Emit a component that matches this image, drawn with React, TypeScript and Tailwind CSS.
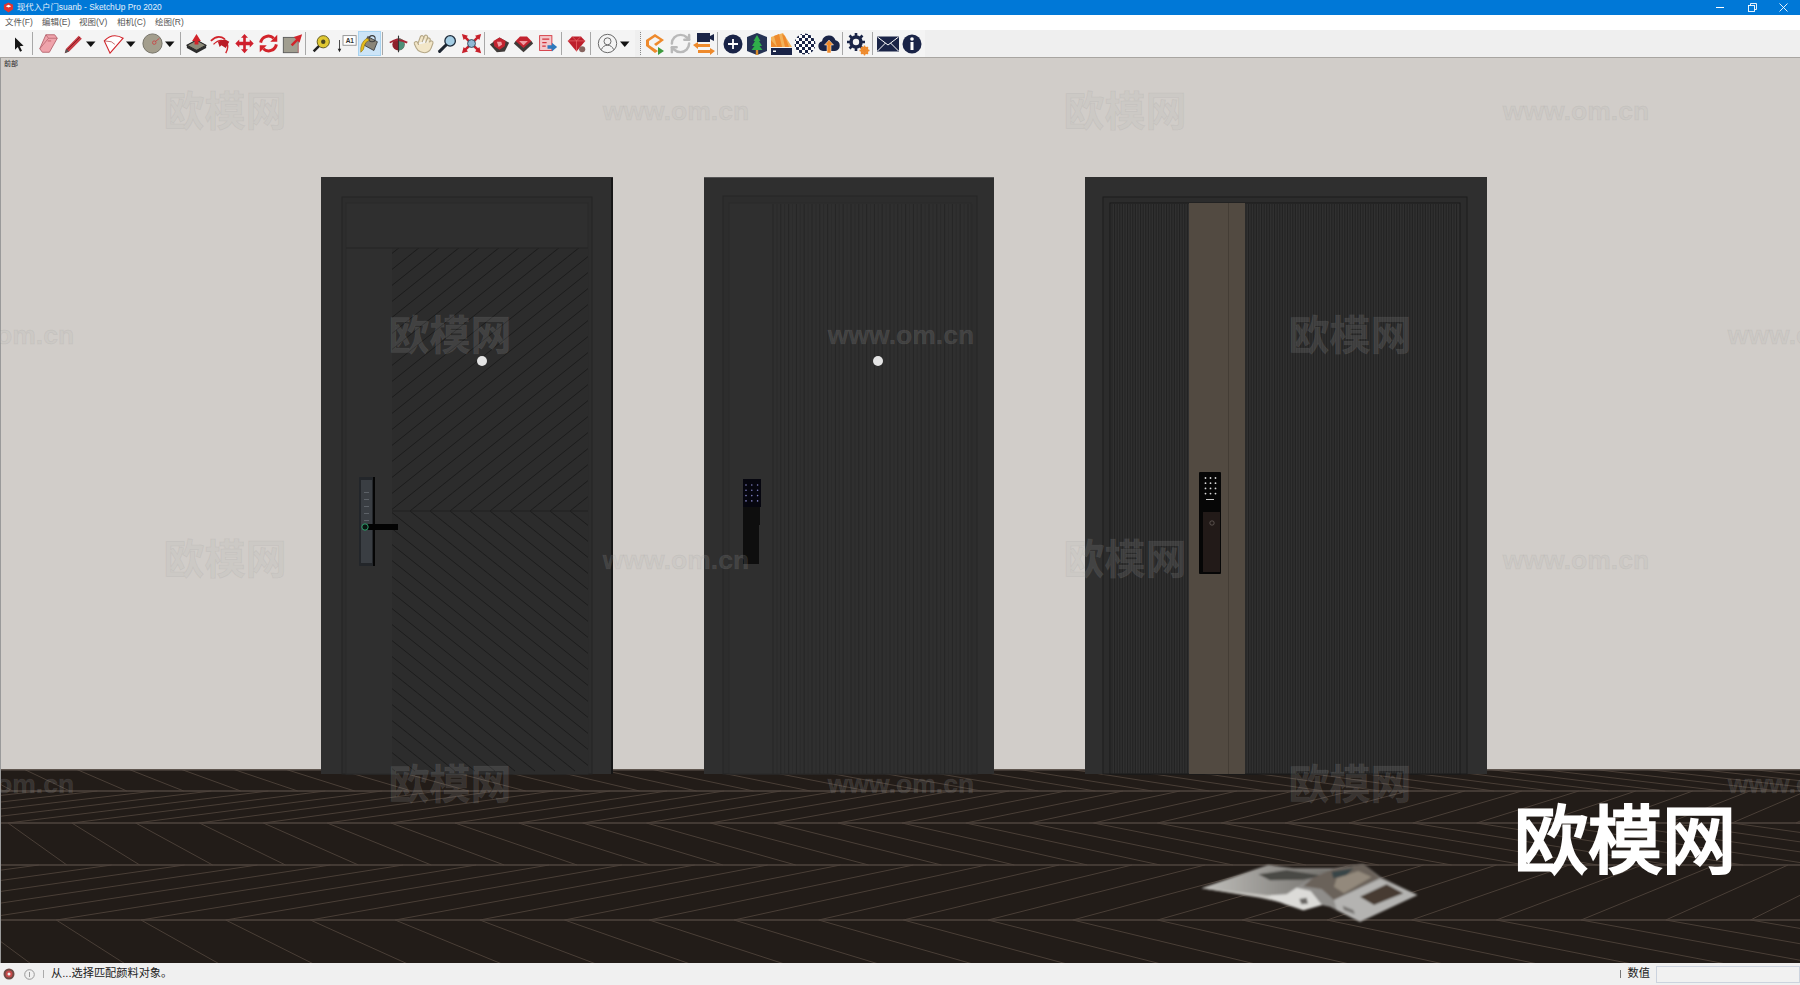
import { Hand, RefreshCw } from 'lucide-react';
import type { ReactNode } from 'react';

const NAVY = '#1a2447';
const ORANGE = '#ee8a2c';
const RED = '#d2232a';

const range = (from: number, to: number, step: number) => {
  const out: number[] = [];
  for (let v = from; v <= to; v += step) out.push(v);
  return out;
};

// floor is a herringbone seen in perspective, horizon y=526, vanishing point x=900
const H = 526;
const VP = 900;
const P = 0.215;
const floorRows = [
  { top: 765, bottom: 791, phase: 0.43, shift: -0.57, fromBottom: true },
  { top: 791, bottom: 823, phase: 0.03, shift: 0.62, fromBottom: true },
  { top: 823, bottom: 865, phase: 0.03, shift: 0.546, fromBottom: false },
  { top: 865, bottom: 920, phase: 0.04, shift: 0.676, fromBottom: true },
  { top: 920, bottom: 996, phase: 0.04, shift: 0.6, fromBottom: false },
];

const Floor = () => (
  <g>
    <rect x="0" y="765" width="1800" height="205" fill="#221c18" />
    {floorRows.map((row) =>
      range(-40, 40, 1).map((k) => {
        const u = P * (k + row.phase);
        const y1 = row.fromBottom ? row.bottom : row.top;
        const y2 = row.fromBottom ? row.top : row.bottom;
        return (
          <line
            key={row.top + '-' + k}
            x1={VP + u * (y1 - H)}
            y1={y1}
            x2={VP + (u + row.shift) * (y2 - H)}
            y2={y2}
            stroke="#4a3f37"
            strokeWidth="1"
          />
        );
      })
    )}
    {[791, 823, 865, 920].map((y) => (
      <line key={y} x1="0" x2="1800" y1={y} y2={y} stroke="#4f453e" strokeWidth="1.3" />
    ))}
  </g>
);

const Peephole = ({ x }: { x: number }) => <circle cx={x} cy="361" r="5" fill="#e4e4e4" />;

const DoorOne = () => (
  <g>
    <clipPath id="diagTop">
      <rect x="392" y="248" width="196" height="263" />
    </clipPath>
    <clipPath id="diagBottom">
      <rect x="392" y="511" width="196" height="262" />
    </clipPath>
    <rect x="321" y="177" width="292" height="597" fill="#2f2f2f" />
    <rect x="611" y="178" width="2" height="596" fill="#161616" />
    <rect x="342" y="197" width="250" height="577" fill="#2d2d2d" stroke="#242424" />
    <rect x="346" y="203" width="242" height="571" fill="#2f2f2f" stroke="#2a2a2a" />
    <rect x="392" y="248" width="196" height="526" fill="#2c2c2c" />
    <g clipPath="url(#diagTop)">
      {range(50, 600, 20).map((x) => (
        <line key={x} x1={x} y1="511" x2={x + 330} y2="247" stroke="#1c1c1c" />
      ))}
    </g>
    <g clipPath="url(#diagBottom)">
      {range(50, 600, 20).map((x) => (
        <line key={x} x1={x} y1="511" x2={x + 325} y2="771" stroke="#1c1c1c" />
      ))}
    </g>
    <line x1="346" x2="588" y1="248" y2="248" stroke="#242424" />
    <line x1="392" x2="588" y1="511" y2="511" stroke="#202020" />
    <Peephole x={482} />
    <rect x="359" y="477" width="16" height="89" rx="1" fill="#23262a" />
    <rect x="373" y="477" width="2" height="89" fill="#050505" />
    <rect x="361" y="480" width="11" height="83" fill="#3a3e43" />
    {range(492, 521, 7).map((y) => (
      <rect key={y} x="364" y={y} width="5" height="1" fill="#5c6167" />
    ))}
    <rect x="367" y="524" width="31" height="6" fill="#030303" />
    <circle cx="365" cy="527" r="3.2" fill="#0b1512" stroke="#2f9e6c" strokeWidth="1" />
  </g>
);

const DoorTwo = () => (
  <g>
    <rect x="704" y="177" width="290" height="597" fill="#2f2f2f" />
    <rect x="704" y="177" width="290" height="1" fill="#555" />
    <rect x="723" y="196" width="254" height="578" fill="#2d2d2d" stroke="#262626" />
    <rect x="729" y="203" width="242" height="571" fill="#2f2f2f" stroke="#2a2a2a" />
    {range(773, 971, 7.8).map((x) => (
      <g key={x}>
        <line x1={x} x2={x} y1="204" y2="774" stroke="#262626" />
        <line x1={x + 3.9} x2={x + 3.9} y1="204" y2="774" stroke="#2b2b2b" />
      </g>
    ))}
    <Peephole x={878} />
    <rect x="743" y="479" width="18" height="28" fill="#06060f" />
    {[0, 1, 2, 3].map((r) =>
      [0, 1, 2].map((c) => (
        <circle key={r + '-' + c} cx={746 + c * 5.8} cy={485 + r * 5.3} r="0.8" fill="#7f7fc0" />
      ))
    )}
    <rect x="743" y="507" width="17" height="18" fill="#0e0e0e" />
    <rect x="743" y="525" width="16" height="39" fill="#0e0e0e" />
  </g>
);

const DoorThree = () => (
  <g>
    <rect x="1085" y="177" width="402" height="597" fill="#2f2f2f" />
    <rect x="1103" y="197" width="364" height="577" fill="#2c2c2c" stroke="#1c1c1c" />
    <rect x="1110" y="203" width="350" height="571" fill="#303030" stroke="#191919" />
    {range(1112, 1188, 2.6).map((x) => (
      <line key={x} x1={x} x2={x} y1="204" y2="774" stroke="#222222" />
    ))}
    {range(1246, 1459, 2.6).map((x) => (
      <line key={x} x1={x} x2={x} y1="204" y2="774" stroke="#222222" />
    ))}
    <rect x="1189" y="203" width="56" height="571" fill="#524a41" />
    <rect x="1228" y="203" width="1" height="571" fill="#443d35" />
    <rect x="1199" y="472" width="22" height="102" rx="1" fill="#060606" />
    <rect x="1203" y="512" width="17" height="60" fill="#221a18" />
    {[0, 1, 2, 3].map((r) =>
      [0, 1, 2].map((c) => (
        <circle key={r + '-' + c} cx={1205.5 + c * 5} cy={478 + r * 5.2} r="0.9" fill="#d8d8d8" />
      ))
    )}
    <rect x="1206" y="499" width="8" height="1" fill="#ccc" />
    <circle cx="1212" cy="523" r="2.2" fill="none" stroke="#6d6460" strokeWidth="0.7" />
  </g>
);

const Magazine = () => (
  <g transform="translate(1190 855) scale(0.3333)" filter="url(#soft)">
    <polygon
      points="35,100 235,30 310,40 430,40 520,27 570,65 682,120 510,200 420,155 395,150 340,166 300,150 210,126"
      fill="#8f8d8a"
    />
    <polygon points="35,100 235,30 300,42 430,45 350,78 290,112 225,125" fill="url(#leftPage)" />
    <polygon points="205,58 290,45 400,62 340,74 240,76" fill="#4a4845" />
    <polygon points="35,100 225,120 300,148 210,128" fill="#c9c7c2" />
    <polygon points="430,42 520,27 570,68 432,135 395,102 340,94 370,68" fill="#6a625a" />
    <polygon points="440,70 505,48 545,66 462,115 432,95" fill="#93897b" />
    <polygon points="425,50 490,40 470,60 430,70" fill="#384446" />
    <polygon points="432,135 570,72 682,120 510,200 440,165" fill="#b4b3b1" />
    <polygon points="510,125 590,88 640,115 552,150" fill="#473b30" />
    <polygon points="225,122 290,118 320,98 362,108 396,150 340,166 285,148" fill="#dcdbd8" />
    <polygon points="328,132 350,128 354,146 334,148" fill="#6a6865" />
    <polygon points="458,152 490,165 495,178 462,165" fill="#74726f" />
  </g>
);

const Scene = () => (
  <svg className="absolute inset-0 block" width="1800" height="905" viewBox="0 58 1800 905">
    <defs>
      <filter id="soft" x="-5%" y="-10%" width="110%" height="120%">
        <feGaussianBlur stdDeviation="3.5" />
      </filter>
      <linearGradient id="leftPage" x1="0" x2="1" y1="0" y2="0">
        <stop offset="0" stopColor="#c0bfbb" />
        <stop offset="0.6" stopColor="#8f8d89" />
        <stop offset="1" stopColor="#73716c" />
      </linearGradient>
    </defs>
    <Floor />
    <rect x="0" y="58" width="1800" height="712" fill="#d1cdc9" />
    <rect x="0" y="769" width="1800" height="1.5" fill="#5f554e" />
    <rect x="0" y="58" width="1" height="905" fill="#9a9a9a" />
    <DoorOne />
    <DoorTwo />
    <DoorThree />
    <Magazine />
  </svg>
);

const watermarks = [
  { text: '欧模网', cls: 'left-[225px] top-[29px]', cn: true },
  { text: 'www.om.cn', cls: 'left-[676px] top-[28px]', cn: false },
  { text: '欧模网', cls: 'left-[1125px] top-[29px]', cn: true },
  { text: 'www.om.cn', cls: 'left-[1576px] top-[28px]', cn: false },
  { text: 'www.om.cn', cls: 'left-[1px] top-[252px]', cn: false },
  { text: '欧模网', cls: 'left-[450px] top-[253px]', cn: true },
  { text: 'www.om.cn', cls: 'left-[901px] top-[252px]', cn: false },
  { text: '欧模网', cls: 'left-[1350px] top-[253px]', cn: true },
  { text: 'www.om.cn', cls: 'left-[1801px] top-[252px]', cn: false },
  { text: '欧模网', cls: 'left-[225px] top-[477px]', cn: true },
  { text: 'www.om.cn', cls: 'left-[676px] top-[477px]', cn: false },
  { text: '欧模网', cls: 'left-[1125px] top-[477px]', cn: true },
  { text: 'www.om.cn', cls: 'left-[1576px] top-[477px]', cn: false },
  { text: 'www.om.cn', cls: 'left-[1px] top-[701px]', cn: false },
  { text: '欧模网', cls: 'left-[450px] top-[702px]', cn: true },
  { text: 'www.om.cn', cls: 'left-[901px] top-[701px]', cn: false },
  { text: '欧模网', cls: 'left-[1350px] top-[702px]', cn: true },
  { text: 'www.om.cn', cls: 'left-[1801px] top-[701px]', cn: false },
];

const Caret = () => (
  <svg width="12" height="24" viewBox="0 0 12 24">
    <path d="M1 9.5h9.5L5.75 15z" fill="#111" />
  </svg>
);

const Sep = ({ className = '' }: { className?: string }) => (
  <div className={'h-[23px] w-px bg-[#a8a8a8] ' + className} />
);

const Tool = ({ children, className = '', big = false }: { children: ReactNode; className?: string; big?: boolean }) => (
  <div
    className={
      'flex h-6 w-6 shrink-0 items-center justify-center ' +
      (big ? '' : '[&>svg]:h-[21px] [&>svg]:w-[21px] ') +
      className
    }
  >
    {children}
  </div>
);

const Svg = ({ children }: { children: ReactNode }) => (
  <svg width="24" height="24" viewBox="0 0 24 24">
    {children}
  </svg>
);

const Icons = {
  arrow: (
    <Svg>
      <path d="M8 5v14l3.2-3 2.6 5.4 2.2-1-2.6-5.3 4.4-.4z" fill="#151515" />
    </Svg>
  ),
  eraser: (
    <Svg>
      <path d="M9 2h10l3 4-9 16H5l-3-4z" fill="#efa3ab" stroke="#b2606a" strokeWidth="1" />
      <path d="M9 2l3 4h10M12 6L2 18" fill="none" stroke="#b2606a" strokeWidth="0.8" />
      <rect x="11" y="8" width="4" height="2" fill="#d98089" />
    </Svg>
  ),
  pencil: (
    <Svg>
      <path d="M2 23l1.500-5L18 3l3.500 3.500L7 21z" fill="#c73a44" />
      <path d="M2 23l1.500-5 3.500 3z" fill="#555" />
      <path d="M5 19L19.500 4.500" stroke="#7d1a1e" strokeWidth="1" />
    </Svg>
  ),
  arc: (
    <Svg>
      <path d="M8 23L1.500 9Q11 -1 23 6z" fill="#fff" stroke={RED} strokeWidth="1.300" />
      <path d="M1.500 9l8 1 4 3" stroke="#a33" fill="none" strokeWidth="0.8" />
    </Svg>
  ),
  circle: (
    <Svg>
      <circle cx="12" cy="12" r="11" fill="#a39e8d" stroke="#6d6a60" />
      <circle cx="14" cy="11" r="2" fill="none" stroke="#c94646" />
      <path d="M15 10l5-4" stroke="#c94646" />
    </Svg>
  ),
  pushPull: (
    <Svg>
      <path d="M1 14l11-6 11 6-11 6z" fill="#8d8a78" stroke="#222" strokeWidth="1.2" />
      <path d="M1 14v3l11 6 11-6v-3l-11 6z" fill="#2c2c2c" />
      <path d="M12 1l5 8h-2.800v4H9.800V9H7z" fill={RED} />
    </Svg>
  ),
  follow: (
    <Svg>
      <path d="M1 9Q9 1 17 7" fill="none" stroke={RED} strokeWidth="2" />
      <path d="M4 13Q12 5 19 11Q22 16 18 23" fill="none" stroke={RED} strokeWidth="1.6" />
      <path d="M9 10l8-3 5 3-4 7-5-3-2 2z" fill="#b91c25" />
    </Svg>
  ),
  move: (
    <Svg>
      <path
        d="M12 1l4 4.500h-2.500v4.500H18V7.500l4.500 4.500-4.500 4.500V14h-4.500v4.500H16L12 23l-4-4.500h2.500V14H6v2.500L1.500 12 6 7.500V10h4.500V5.500H8z"
        fill="#cf1f2c"
      />
    </Svg>
  ),
  rotate: (
    <Svg>
      <path d="M3 11a9 9 0 0 1 15-5" fill="none" stroke={RED} strokeWidth="3.4" />
      <path d="M21 13a9 9 0 0 1-15 5" fill="none" stroke={RED} strokeWidth="3.4" />
      <path d="M22 2v8h-8zM2 22v-8h8z" fill={RED} />
    </Svg>
  ),
  scale: (
    <Svg>
      <rect x="1.500" y="5" width="17" height="17.500" fill="#a19e90" stroke="#555" />
      <path d="M10 13l6-6-2.500-2.500L23 1.500 20 11l-2-2-6 6z" fill={RED} />
      <path d="M18.500 12v10.500" stroke="#e48a8a" />
    </Svg>
  ),
  tape: (
    <Svg>
      <path d="M2 20l6-6 2 2-6 6z" fill="#222" />
      <circle cx="14" cy="10" r="7" fill="#e0c832" stroke="#554d10" />
      <circle cx="14" cy="10" r="2.500" fill="#4a4620" />
    </Svg>
  ),
  text: (
    <Svg>
      <rect x="8" y="3" width="15" height="11" fill="#fff" stroke="#8a8a8a" />
      <text x="11" y="11.500" fontSize="7.500" fontFamily="Liberation Sans, sans-serif" fontWeight="700" fill="#333">
        A1
      </text>
      <path d="M4 8v12" stroke="#333" />
      <path d="M2 18h4l-2 4z" fill="#222" />
    </Svg>
  ),
  paint: (
    <Svg>
      <path d="M10 4l11 6-4 10-11-6z" fill="#8a8578" stroke="#3a3a3a" />
      <circle cx="15" cy="6.500" r="3.500" fill="none" stroke="#3a3a3a" strokeWidth="1.200" />
      <path d="M9 6Q1 11 2 22Q6 19 6 15Q7 10 12 8z" fill="#e6bc1c" stroke="#7c6410" strokeWidth="0.6" />
    </Svg>
  ),
  orbit: (
    <Svg>
      <circle cx="12" cy="13" r="7" fill="#8e1f2b" />
      <path d="M12 6a7 7 0 0 1 0 14z" fill="#4c8f78" />
      <path d="M2 11q9-6 20 0" fill="none" stroke="#a52535" strokeWidth="2" />
      <path d="M12 3v19" stroke="#333" strokeWidth="1.300" />
    </Svg>
  ),
  zoom: (
    <Svg>
      <path d="M3 21l7-7" stroke="#1d2530" strokeWidth="3.500" strokeLinecap="round" />
      <circle cx="15" cy="9" r="6" fill="#a4cde4" stroke="#1d2b3a" strokeWidth="1.500" />
    </Svg>
  ),
  extents: (
    <Svg>
      <path d="M1 1l7 2-1.500 1.500L11 9 9 11 4.500 6.500 3 8zM23 1l-2 7-1.500-1.500L15 11l-2-2 4.500-4.500L16 3zM1 23l2-7 1.500 1.500L9 13l2 2-4.500 4.500L8 21zM23 23l-7-2 1.500-1.500L13 15l2-2 4.500 4.500L21 16z" fill="#c8202b" />
      <circle cx="12" cy="12" r="4.500" fill="#8fbad6" stroke="#2d3d4d" />
    </Svg>
  ),
  warehouse: (
    <Svg>
      <path d="M1 13l11-8 11 6-5 10-9 1z" fill="#3f3a38" />
      <path d="M5 9l7-4 7 4-1 6-6 4-6-4z" fill="#c32430" />
      <path d="M9 10h5l1 3-4 3z" fill="#f0a1a5" />
    </Svg>
  ),
  warehouse2: (
    <Svg>
      <path d="M1 12l11 10 11-10-2-3H3z" fill="#3f3a38" />
      <path d="M3 9l5-5h8l5 5-9 8z" fill="#c32430" />
      <path d="M7 9h10l-5 5z" fill="#ee9aa0" />
    </Svg>
  ),
  share: (
    <Svg>
      <rect x="3" y="3" width="14" height="17" fill="#f3c9cc" stroke="#d3333c" />
      <path d="M6 7h8M6 11h5M6 15h4" stroke="#d3333c" strokeWidth="1.600" />
      <path d="M12 14h5v-3l6 5-6 5v-3h-5z" fill="#2f79bd" />
    </Svg>
  ),
  ruby: (
    <Svg>
      <path d="M2 9l5-5h10l5 5-10 12z" fill="#bd1f2c" />
      <path d="M7 4l5 5 5-5M2 9h20M12 9v12" stroke="#e77" strokeWidth="0.700" fill="none" />
      <circle cx="18.500" cy="18.500" r="3.500" fill="#87645f" />
    </Svg>
  ),
  user: (
    <Svg>
      <circle cx="12" cy="12" r="10.500" fill="none" stroke="#666" strokeWidth="1.100" />
      <circle cx="12" cy="9.500" r="4" fill="none" stroke="#666" strokeWidth="1.100" />
      <path d="M5 19q2-5 7-5t7 5" fill="none" stroke="#666" strokeWidth="1.100" />
    </Svg>
  ),
  extension: (
    <Svg>
      <path d="M12 2L3 8v6l9 7 3-2-9-6V9l6-4 5 3-6 4 2 2 8-6z" fill={ORANGE} />
      <path d="M15 15v8l6-4z" fill="#3d9a3d" />
    </Svg>
  ),
  video: (
    <Svg>
      <path d="M5 1h13v9H5zM18 4l4-2v7l-4-2z" fill={NAVY} />
      <path d="M1 13l5-3v2h12v3H6v2zM23 19l-5-3v2H6v3h12v2z" fill={ORANGE} />
    </Svg>
  ),
  plus: (
    <Svg>
      <circle cx="12" cy="12" r="9.500" fill={NAVY} />
      <path d="M12 7v10M7 12h10" stroke="#fff" strokeWidth="1.800" />
    </Svg>
  ),
  tree: (
    <Svg>
      <path d="M12 1l10 4v14l-10 4-10-4V5z" fill="#263354" />
      <path d="M12 3l3.500 6H14l3 5h-2.500l3 4H6.500l3-4H7l3-5H8.500z" fill="#2fae4a" />
      <rect x="10.800" y="18" width="2.400" height="5" fill="#d88b2c" />
    </Svg>
  ),
  fan: (
    <Svg>
      <path d="M2 15V5L14 1l9 14z" fill="#f2b25a" />
      <path d="M2 15V8l6 7zM8 15L5 4l5-2 3 13zM16 15L13 2l3 2 4 11z" fill={ORANGE} />
      <rect x="2" y="16" width="21" height="7" fill={NAVY} />
      <rect x="4" y="18.500" width="3" height="1.500" fill="#fff" />
    </Svg>
  ),
  checker: (
    <svg width="24" height="24" viewBox="0 0 24 24">
      <clipPath id="ball">
        <circle cx="12" cy="12" r="10.500" />
      </clipPath>
      <g clipPath="url(#ball)">
        <rect width="24" height="24" fill="#fff" />
        {[0, 1, 2, 3, 4, 5, 6, 7].map((r) =>
          [0, 1, 2, 3, 4, 5, 6, 7].map((c) =>
            (r + c) % 2 === 0 ? <rect key={r + '-' + c} x={c * 3} y={r * 3} width="3" height="3" fill={NAVY} /> : null
          )
        )}
      </g>
    </svg>
  ),
  cloud: (
    <Svg>
      <path d="M6 19a5 5 0 0 1-1-9.800 7 7 0 0 1 13.500-1A5.500 5.500 0 0 1 18 19z" fill={NAVY} />
      <path d="M12 8l4.500 5H14v8h-4v-8H7.500z" fill={ORANGE} stroke="#fff" strokeWidth="0.500" />
    </Svg>
  ),
  gear: (
    <Svg>
      <circle cx="10" cy="10" r="5" fill="none" stroke={NAVY} strokeWidth="3.600" />
      <path d="M10 1v4M10 15v4M1 10h4M15 10h4M3.500 3.500l3 3M13.500 13.500l3 3M16.500 3.500l-3 3M6.500 13.500l-3 3" stroke={NAVY} strokeWidth="2.600" />
      <circle cx="18.500" cy="18.500" r="3" fill="none" stroke={ORANGE} strokeWidth="2" />
      <path d="M18.500 13.500v10M13.500 18.500h10M15 15l7 7M22 15l-7 7" stroke={ORANGE} strokeWidth="1.300" />
    </Svg>
  ),
  mail: (
    <Svg>
      <rect x="1" y="4.500" width="22" height="15" fill={NAVY} />
      <path d="M1.500 5L12 13 22.500 5M1.500 19L9.500 11M22.500 19L14.500 11" stroke="#fff" strokeWidth="1" fill="none" />
    </Svg>
  ),
  info: (
    <Svg>
      <circle cx="12" cy="12" r="9.500" fill={NAVY} />
      <rect x="10.500" y="10" width="3" height="8" fill="#fff" />
      <circle cx="12" cy="7" r="1.800" fill="#fff" />
    </Svg>
  ),
};

const Toolbar = () => (
  <div className="flex h-[28px] items-center border-b border-[#a8a5a1] bg-[#efefef]">
    <div className="flex h-full w-[635px] items-center bg-[#f4f4f4] pl-[6px]">
      <Tool>{Icons.arrow}</Tool>
      <Sep className="ml-[2px]" />
      <Tool className="ml-[3px]">{Icons.eraser}</Tool>
      <Tool className="ml-[1px]">{Icons.pencil}</Tool>
      <Caret />
      <Tool className="ml-[4px]">{Icons.arc}</Tool>
      <Caret />
      <Tool className="ml-[3px]">{Icons.circle}</Tool>
      <Caret />
      <Sep className="ml-[4px]" />
      <Tool className="ml-[3px]">{Icons.pushPull}</Tool>
      <Tool>{Icons.follow}</Tool>
      <Tool>{Icons.move}</Tool>
      <Tool>{Icons.rotate}</Tool>
      <Tool>{Icons.scale}</Tool>
      <Sep className="ml-[1px]" />
      <Tool className="ml-[3px]">{Icons.tape}</Tool>
      <Tool className="ml-[1px]">{Icons.text}</Tool>
      <div className="flex h-[25px] w-[23px] items-center justify-center border border-[#a8d3f0] bg-[#cce4f7] [&>svg]:h-[21px] [&>svg]:w-[21px]">
        {Icons.paint}
      </div>
      <Sep className="ml-[1px]" />
      <Tool className="ml-[3px]">{Icons.orbit}</Tool>
      <Tool className="ml-[1px]">
        <Hand className="rotate-[20deg]" fill="#f2e6c8" stroke="#b5a888" strokeWidth={1.3} />
      </Tool>
      <Tool>{Icons.zoom}</Tool>
      <Tool>{Icons.extents}</Tool>
      <Sep className="ml-[1px]" />
      <Tool className="ml-[2px]">{Icons.warehouse}</Tool>
      <Tool>{Icons.warehouse2}</Tool>
      <Tool>{Icons.share}</Tool>
      <Sep className="ml-[2px]" />
      <Tool className="ml-[2px]">{Icons.ruby}</Tool>
      <Sep className="ml-[2px]" />
      <Tool className="ml-[4px]">{Icons.user}</Tool>
      <Caret />
    </div>
    <div className="ml-[5px] h-[23px] border-l border-dotted border-[#888]" />
    <div className="flex h-full w-[284px] items-center bg-[#f4f4f4] pl-[2px]">
      <Tool big>{Icons.extension}</Tool>
      <Tool big className="ml-[1px]">
        <RefreshCw size={23} stroke="#b9b9b9" strokeWidth={2.6} />
      </Tool>
      <Tool big>{Icons.video}</Tool>
      <Sep className="ml-[1px]" />
      <Tool big className="ml-[3px]">{Icons.plus}</Tool>
      <Tool big>{Icons.tree}</Tool>
      <Tool big>{Icons.fan}</Tool>
      <Tool big>{Icons.checker}</Tool>
      <Tool big>{Icons.cloud}</Tool>
      <Sep className="ml-[1px]" />
      <Tool big className="ml-[3px]">{Icons.gear}</Tool>
      <Sep className="ml-[2px]" />
      <Tool big className="ml-[3px]">{Icons.mail}</Tool>
      <Tool big>{Icons.info}</Tool>
    </div>
  </div>
);

const cjk = "font-['Liberation_Sans','Noto_Sans_CJK_SC',sans-serif]";

export default function App() {
  return (
    <div className={'flex h-[985px] w-[1800px] flex-col overflow-hidden bg-white ' + cjk}>
      {/* title bar */}
      <div className="flex h-[15px] items-center bg-[#0078d7] pl-[3px] text-[8.4px] leading-none text-[#e6f1fb]">
        <svg width="11" height="11" viewBox="0 0 12 12">
          <path d="M1 3l5-2.500L11 3v5l-5 3.500L1 8z" fill="#e3342f" />
          <path d="M3 4.500l3-1.500 3 1.500-3 1.500z" fill="#fff" />
        </svg>
        <span className="ml-[3px]">现代入户门suanb - SketchUp Pro 2020</span>
        <div className="ml-auto flex items-center text-white">
          <div className="flex w-[32px] justify-center">
            <div className="h-px w-[8px] bg-white" />
          </div>
          <div className="flex w-[32px] justify-center">
            <svg width="9" height="9" viewBox="0 0 9 9" fill="none" stroke="#fff" strokeWidth="0.9">
              <rect x="0.500" y="2.500" width="6" height="6" />
              <path d="M2.500 2.500v-2h6v6h-2" />
            </svg>
          </div>
          <div className="flex w-[32px] justify-center pr-[1px]">
            <svg width="9" height="9" viewBox="0 0 9 9" stroke="#fff" strokeWidth="0.9">
              <path d="M0.500 0.500l8 8M8.500 0.500l-8 8" />
            </svg>
          </div>
        </div>
      </div>

      {/* menu bar */}
      <div className="flex h-[15px] items-center gap-[10px] whitespace-nowrap bg-white pl-[5px] text-[8.5px] leading-none text-[#555]">
        <span className="w-[27px]">文件(F)</span>
        <span className="w-[27px]">编辑(E)</span>
        <span className="w-[28px]">视图(V)</span>
        <span className="w-[28px]">相机(C)</span>
        <span className="w-[28px]">绘图(R)</span>
      </div>

      <Toolbar />

      {/* viewport */}
      <div className="relative flex-1 overflow-hidden">
        <Scene />
        <div className="absolute left-[4px] top-[1px] text-[7px] leading-[9px] text-[#222]">前部</div>
        {watermarks.map((w) => (
          <div
            key={w.cls}
            className={
              'absolute h-[50px] -translate-x-1/2 font-bold leading-[50px] whitespace-nowrap text-[rgba(180,180,180,0.18)] [-webkit-text-stroke:1px_rgba(130,130,130,0.1)] ' +
              w.cls +
              (w.cn ? ' text-[41px]' : ' text-[26.500px]')
            }
          >
            {w.text}
          </div>
        ))}
        <div className="absolute left-[1514px] top-[737px] text-[74px] leading-[94px] font-normal whitespace-nowrap text-white [-webkit-text-stroke:3px_white]">
          欧模网
        </div>
      </div>

      {/* status bar */}
      <div className="flex h-[22px] items-center bg-[#f0f0f0] text-[11.2px] leading-none text-[#222]">
        <svg className="ml-[3px]" width="12" height="12" viewBox="0 0 12 12">
          <circle cx="6" cy="6" r="5.500" fill="#6e4a45" />
          <circle cx="6" cy="6" r="3.500" fill="#c74a4a" />
          <circle cx="6" cy="6" r="1.500" fill="#eee" />
        </svg>
        <svg className="ml-[9px]" width="11" height="11" viewBox="0 0 11 11">
          <circle cx="5.500" cy="5.500" r="4.800" fill="none" stroke="#999" />
          <path d="M5.500 3v5" stroke="#999" />
        </svg>
        <div className="ml-[8px] h-[8px] w-px bg-[#aaa]" />
        <span className="ml-[7px]">从...选择匹配颜料对象。</span>
        <div className="ml-auto h-[8px] w-px bg-[#777]" />
        <span className="ml-[7px]">数值</span>
        <div className="ml-[6px] h-[17px] w-[144px] border border-[#ccd3de] bg-[#f1f1f1]" />
      </div>
    </div>
  );
}
